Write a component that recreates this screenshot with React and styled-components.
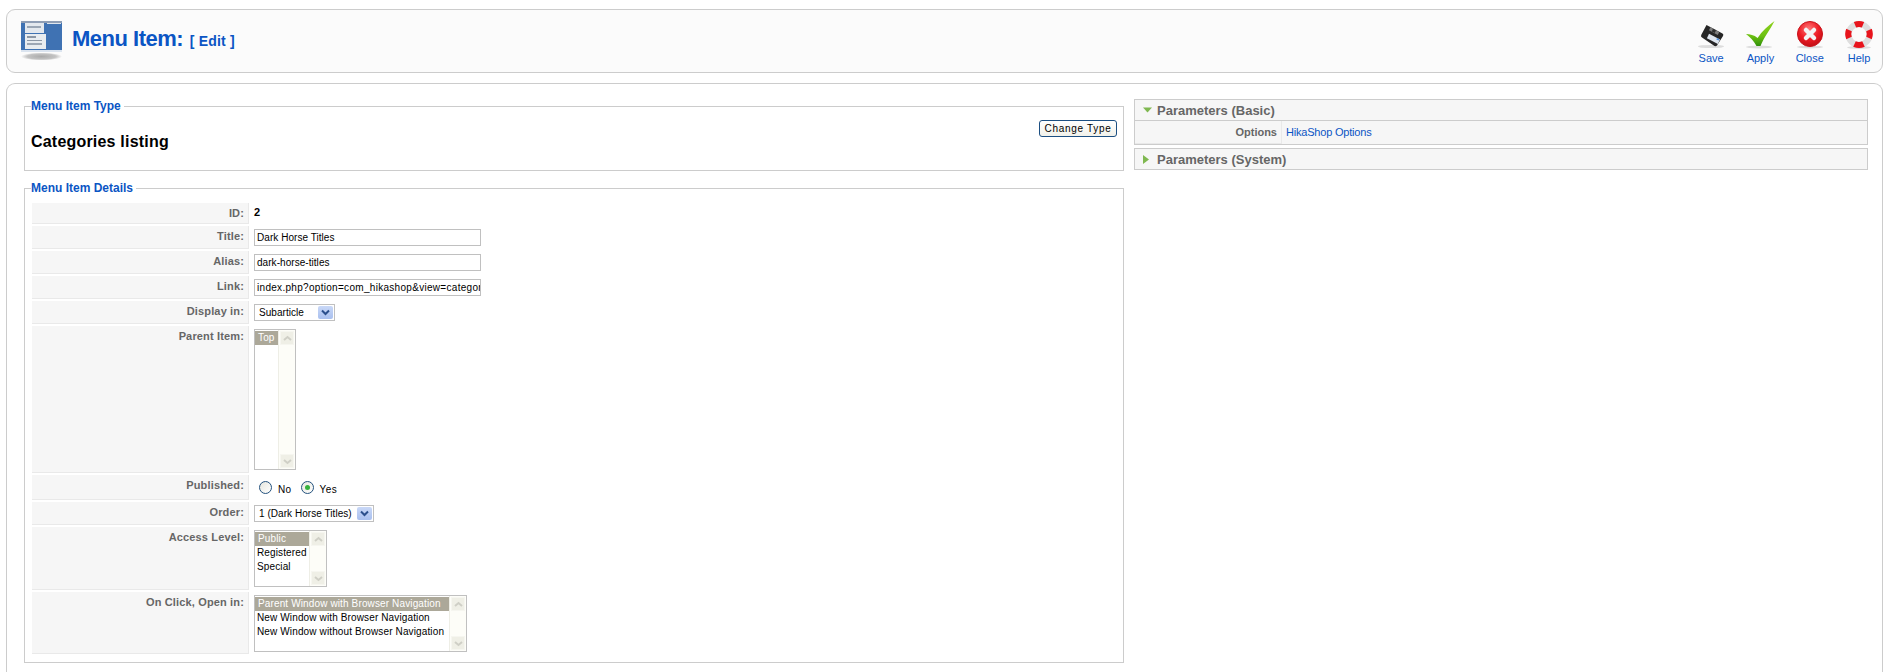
import React from "react";
import styled, { createGlobalStyle } from "styled-components";

const GlobalStyle = createGlobalStyle`
  html, body {
    margin: 0;
    background: #fff;
  }
  body {
    font-family: "Liberation Sans", Arial, sans-serif;
    font-size: 11px;
    color: #000;
    height: 672px;
    overflow: hidden;
  }
`;

const Page = styled.div`
  padding: 9px 6px 0 6px;
  display: flex;
  flex-direction: column;
  gap: 10px;
`;

const Header = styled.div`
  height: 64px;
  box-sizing: border-box;
  border: 1px solid #ccc;
  border-radius: 9px;
  background: #fbfbfb;
  display: flex;
  align-items: center;
  justify-content: space-between;
  padding: 0 0 0 14px;
`;

const TitleWrap = styled.div`
  display: flex;
  align-items: center;
  gap: 9px;
`;

const Title = styled.h1`
  margin: 0 0 4px 0;
  font-size: 22px;
  font-weight: bold;
  letter-spacing: -0.5px;
  color: #0b55c4;
  small {
    font-size: 14px;
    letter-spacing: 0.2px;
    margin-left: 1px;
  }
`;

const Toolbar = styled.div`
  display: flex;
  align-items: flex-start;
  gap: 3.3px;
`;

const ToolButton = styled.a`
  width: 46px;
  display: flex;
  flex-direction: column;
  align-items: center;
  font-size: 11px;
  color: #0b55c4;
  gap: 1px;
  svg {
    display: block;
  }
`;

const Main = styled.div`
  border: 1px solid #ccc;
  border-radius: 9px 9px 0 0;
  border-bottom: 0;
  height: 590px;
  box-sizing: border-box;
  padding: 15px 14px 0 17px;
  display: flex;
  gap: 10px;
`;

const LeftCol = styled.div`
  width: 1100px;
  flex: none;
  display: flex;
  flex-direction: column;
  gap: 11px;
  padding-top: 1px;
`;

const RightCol = styled.div`
  flex: 1;
  display: flex;
  flex-direction: column;
  gap: 3px;
`;

const Group = styled.fieldset`
  margin: 0;
  padding: 0 7px ${(p) => p.$bottom}px 7px;
  border: 1px solid #ccc;
  box-sizing: border-box;
  min-width: 0;
`;

const Legend = styled.legend`
  padding: 0 3px 0 0;
  margin-left: -1px;
  color: #0b55c4;
  font-size: 12px;
  font-weight: bold;
  line-height: 13px;
`;

const TypeBody = styled.div`
  height: 57px;
  display: flex;
  justify-content: space-between;
  align-items: flex-start;
`;

const TypeName = styled.div`
  font-size: 16px;
  font-weight: bold;
  letter-spacing: 0.2px;
  margin: 20px 0 0 -1px;
  line-height: 18px;
`;

const ChangeButton = styled.button`
  width: 78px;
  height: 17px;
  margin: 7px -1px 0 0;
  padding: 0;
  font: 10px "Liberation Sans", Arial, sans-serif;
  letter-spacing: 0.7px;
  color: #000;
  background: linear-gradient(#fff, #f1f1ea);
  border: 1px solid #1c4f82;
  border-radius: 3px;
`;

const Rows = styled.div`
  display: flex;
  flex-direction: column;
  gap: 2px;
  padding-top: 8px;
`;

const Row = styled.div`
  display: flex;
  gap: 2px;
  height: ${(p) => p.$height}px;
`;

const Label = styled.div`
  width: 217px;
  flex: none;
  box-sizing: border-box;
  background: #f6f6f6;
  border-bottom: 1px solid #e9e9e9;
  border-right: 1px solid #e9e9e9;
  text-align: right;
  padding: 4px 4px 0 0;
  color: #666;
  font-size: 11px;
  font-weight: bold;
  letter-spacing: 0.15px;
  line-height: 13px;
`;

const Value = styled.div`
  padding: 3px 0 0 3px;
  font-size: 11px;
  line-height: 13px;
  font-weight: ${(p) => (p.$bold ? "bold" : "normal")};
`;

const TextBox = styled.div`
  width: 227px;
  height: 17px;
  box-sizing: border-box;
  border: 1px solid #c0c0c0;
  padding: 1px 0 0 2px;
  font-size: 10px;
  letter-spacing: ${(p) => p.$spacing || 0.05}px;
  line-height: 13px;
  white-space: nowrap;
  overflow: hidden;
`;

const SelectBox = styled.div`
  width: ${(p) => p.$width}px;
  height: 17px;
  box-sizing: border-box;
  border: 1px solid #c0c0c0;
  padding: 1px 0 0 4px;
  font-size: 10px;
  letter-spacing: 0.05px;
  line-height: 13px;
  white-space: nowrap;
  position: relative;
`;

const SelectArrow = styled.span`
  position: absolute;
  top: 1px;
  right: 1px;
  width: 15px;
  height: 13px;
  background: linear-gradient(#c9d8f7, #a9c0ef);
  border-radius: 2px;
  display: flex;
  align-items: center;
  justify-content: center;
`;

const ListBox = styled.div`
  width: ${(p) => p.$width}px;
  height: ${(p) => p.$height}px;
  box-sizing: border-box;
  border: 1px solid #c0c0c0;
  display: flex;
  font-size: 10px;
  letter-spacing: 0.13px;
`;

const ListItems = styled.div`
  flex: 1;
  white-space: nowrap;
  padding-top: 1px;
`;

const ListItem = styled.div`
  height: 14px;
  line-height: 14px;
  padding-left: ${(p) => (p.$selected ? 3 : 2)}px;
  background: ${(p) => (p.$selected ? "#aca899" : "transparent")};
  color: ${(p) => (p.$selected ? "#fff" : "#000")};
`;

const ScrollTrack = styled.div`
  width: 16px;
  flex: none;
  background: #fdfdf8;
  border-left: 1px solid #eeeee6;
  display: flex;
  flex-direction: column;
  justify-content: space-between;
`;

const ScrollBtn = styled.div`
  height: 14px;
  margin: 1px;
  background: #efefe6;
  border: 1px solid #f6f6f0;
  box-sizing: border-box;
  display: flex;
  align-items: center;
  justify-content: center;
`;

const RadioRow = styled.div`
  display: flex;
  align-items: flex-start;
  font-size: 10px;
  line-height: 13px;
  padding: 6px 0 0 8px;
`;

const Radio = styled.span`
  width: 13px;
  height: 13px;
  box-sizing: border-box;
  border: 1px solid #24527e;
  border-radius: 50%;
  background: linear-gradient(135deg, #e6e6de, #fff);
  display: flex;
  align-items: center;
  justify-content: center;
  &::after {
    content: "";
    display: ${(p) => (p.$checked ? "block" : "none")};
    width: 5px;
    height: 5px;
    border-radius: 50%;
    background: #35b13c;
  }
`;

const RadioText = styled.span`
  margin: 2px 9px 0 6px;
  letter-spacing: 0.4px;
`;

const Panel = styled.div`
  border: 1px solid #ccc;
  background: #f6f6f6;
`;

const PanelTitle = styled.div`
  height: 20px;
  display: flex;
  align-items: center;
  padding-left: 8px;
  gap: 3px;
  font-size: 13px;
  font-weight: bold;
  color: #666;
`;

const PanelBody = styled.div`
  border-top: 1px solid #ccc;
  display: flex;
  height: 23px;
`;

const ParamLabel = styled.div`
  width: 147px;
  box-sizing: border-box;
  text-align: right;
  padding: 5px 4px 0 0;
  border-right: 1px solid #e9e9e9;
  border-bottom: 1px solid #e9e9e9;
  font-weight: bold;
  color: #666;
  line-height: 13px;
`;

const ParamValue = styled.a`
  padding: 5px 0 0 4px;
  color: #0b55c4;
  letter-spacing: -0.2px;
  line-height: 13px;
`;

const ScrollChevron = ({ up }) => (
  <svg width="9" height="7" viewBox="0 0 9 7">
    <path d={up ? "M1 5 L4.5 2 L8 5" : "M1 2 L4.5 5 L8 2"} fill="none" stroke="#cfcfc6" strokeWidth="2" />
  </svg>
);

const Scroll = () => (
  <ScrollTrack>
    <ScrollBtn><ScrollChevron up /></ScrollBtn>
    <ScrollBtn><ScrollChevron /></ScrollBtn>
  </ScrollTrack>
);

const SelectChevron = () => (
  <svg width="9" height="7" viewBox="0 0 9 7">
    <path d="M1 1.5 L4.5 5 L8 1.5" fill="none" stroke="#2b4f8c" strokeWidth="2" />
  </svg>
);

const MenuLogo = () => (
  <svg width="42" height="40" viewBox="0 0 42 40">
    <defs>
      <radialGradient id="logoShadow" cx="0.5" cy="0.5" r="0.5">
        <stop offset="0" stopColor="#aaa" />
        <stop offset="0.7" stopColor="#c4c4c4" />
        <stop offset="1" stopColor="#fbfbfb" />
      </radialGradient>
    </defs>
    <rect x="0" y="0" width="41" height="29" fill="#3f72b3" />
    <rect x="0" y="0" width="41" height="2" fill="#8f9eb5" />
    <rect x="0" y="29" width="41" height="2" fill="#dbe4ef" />
    <rect x="4" y="2" width="19" height="10" fill="#e3e8ee" />
    <rect x="6" y="5" width="14" height="2" fill="#9aa6b5" />
    <rect x="4" y="13" width="21" height="15" fill="#e8ecf0" />
    <rect x="6" y="15" width="9" height="2" fill="#8c97a5" />
    <rect x="6" y="19" width="15" height="1" fill="#8c97a5" />
    <rect x="6" y="22" width="15" height="2" fill="#9da7b4" />
    <rect x="26" y="2" width="14" height="1" fill="#dfe6ee" />
    <ellipse cx="20.5" cy="35.5" rx="20.5" ry="4" fill="url(#logoShadow)" />
  </svg>
);

const SaveIcon = () => (
  <svg width="32" height="32" viewBox="0 0 32 32">
    <ellipse cx="16" cy="27.5" rx="13" ry="1.6" fill="#ddd" />
    <path d="M11.5 6 L27.5 14.5 Q29 15.5 28 17 L22 26.5 Q21 27.5 19.5 27 L7 18.5 Q5.5 17.5 6.2 16 Z" fill="#262626" />
    <path d="M15.4 8.3 L24.2 13 L22.8 16 L14 11.3 Z" fill="#7d7d7d" />
    <path d="M18 9.7 L21 11.3 L19.8 14 L16.8 12.4 Z" fill="#2e2e2e" />
    <path d="M14 14.8 L25 20.6 L22.9 25 L11.9 19.2 Z" fill="#dfe6ef" />
    <path d="M22 19 L24.3 20.2 L23.6 21.6 L21.3 20.4 Z" fill="#4f8fdc" />
  </svg>
);

const ApplyIcon = () => (
  <svg width="32" height="32" viewBox="0 0 32 32">
    <defs>
      <linearGradient id="tick" x1="0" x2="0" y1="0" y2="1">
        <stop offset="0" stopColor="#8fd21c" />
        <stop offset="0.6" stopColor="#6cc012" />
        <stop offset="1" stopColor="#2f8f08" />
      </linearGradient>
    </defs>
    <ellipse cx="15" cy="28" rx="13" ry="1.5" fill="#ddd" />
    <path d="M2 15 C6 15 10 16 13.6 19 C18 12 24 7 30.5 2 C26 11 20 18 16.5 27 L12.5 27 C10 22 6 18 2 15 Z" fill="url(#tick)" />
  </svg>
);

const CloseIcon = () => (
  <svg width="32" height="32" viewBox="0 0 32 32">
    <defs>
      <radialGradient id="red" cx="0.45" cy="0.3" r="0.8">
        <stop offset="0" stopColor="#ff7a7a" />
        <stop offset="0.5" stopColor="#ee1c25" />
        <stop offset="1" stopColor="#b30a0f" />
      </radialGradient>
    </defs>
    <ellipse cx="16" cy="28" rx="13" ry="1.5" fill="#ddd" />
    <circle cx="16" cy="15" r="12.5" fill="url(#red)" stroke="#c9121a" />
    <path d="M12 11 L20 19 M20 11 L12 19" stroke="#f4f4f4" strokeWidth="4.5" strokeLinecap="round" />
  </svg>
);

const HelpIcon = () => (
  <svg width="32" height="32" viewBox="0 0 32 32">
    <ellipse cx="16" cy="28.5" rx="12" ry="1.5" fill="#ddd" />
    <circle cx="16" cy="15.5" r="10.5" fill="none" stroke="#dedede" strokeWidth="6" />
    <path d="M6 11 A10.5 10.5 0 0 0 6 19 M26 11 A10.5 10.5 0 0 1 26 19 M12 5.8 A10.5 10.5 0 0 1 20 5.8 M11.5 25 A10.5 10.5 0 0 0 20.5 25" fill="none" stroke="#e8141c" strokeWidth="6" />
  </svg>
);

const tools = [
  { label: "Save", Icon: SaveIcon },
  { label: "Apply", Icon: ApplyIcon },
  { label: "Close", Icon: CloseIcon },
  { label: "Help", Icon: HelpIcon },
];

const Triangle = ({ open }) => (
  <svg width="11" height="9" viewBox="0 0 11 9">
    <path d={open ? "M0 1.5 H9 L4.5 6.5 Z" : "M0 0 L6 4.5 L0 9 Z"} fill="#7fb850" />
  </svg>
);

export default function App() {
  return (
    <>
      <GlobalStyle />
      <Page>
        <Header>
          <TitleWrap>
            <MenuLogo />
            <Title>
              Menu Item: <small>[ Edit ]</small>
            </Title>
          </TitleWrap>
          <Toolbar>
            {tools.map(({ label, Icon }) => (
              <ToolButton key={label}>
                <Icon />
                {label}
              </ToolButton>
            ))}
          </Toolbar>
        </Header>
        <Main>
          <LeftCol>
            <Group $bottom={0}>
              <Legend>Menu Item Type</Legend>
              <TypeBody>
                <TypeName>Categories listing</TypeName>
                <ChangeButton>Change Type</ChangeButton>
              </TypeBody>
            </Group>
            <Group $bottom={8}>
              <Legend>Menu Item Details</Legend>
              <Rows>
                <Row $height={21}>
                  <Label>ID:</Label>
                  <Value $bold>2</Value>
                </Row>
                <Row $height={23}>
                  <Label>Title:</Label>
                  <Value><TextBox>Dark Horse Titles</TextBox></Value>
                </Row>
                <Row $height={23}>
                  <Label>Alias:</Label>
                  <Value><TextBox>dark-horse-titles</TextBox></Value>
                </Row>
                <Row $height={23}>
                  <Label>Link:</Label>
                  <Value><TextBox $spacing={0.3}>index.php?option=com_hikashop&amp;view=category&amp;layout=listing</TextBox></Value>
                </Row>
                <Row $height={23}>
                  <Label>Display in:</Label>
                  <Value>
                    <SelectBox $width={81}>Subarticle<SelectArrow><SelectChevron /></SelectArrow></SelectBox>
                  </Value>
                </Row>
                <Row $height={147}>
                  <Label>Parent Item:</Label>
                  <Value>
                    <ListBox $width={42} $height={141}>
                      <ListItems><ListItem $selected>Top</ListItem></ListItems>
                      <Scroll />
                    </ListBox>
                  </Value>
                </Row>
                <Row $height={25}>
                  <Label>Published:</Label>
                  <RadioRow>
                    <Radio /><RadioText>No</RadioText>
                    <Radio $checked /><RadioText>Yes</RadioText>
                  </RadioRow>
                </Row>
                <Row $height={23}>
                  <Label>Order:</Label>
                  <Value>
                    <SelectBox $width={120}>1 (Dark Horse Titles)<SelectArrow><SelectChevron /></SelectArrow></SelectBox>
                  </Value>
                </Row>
                <Row $height={63}>
                  <Label>Access Level:</Label>
                  <Value>
                    <ListBox $width={73} $height={57}>
                      <ListItems>
                        <ListItem $selected>Public</ListItem>
                        <ListItem>Registered</ListItem>
                        <ListItem>Special</ListItem>
                      </ListItems>
                      <Scroll />
                    </ListBox>
                  </Value>
                </Row>
                <Row $height={62}>
                  <Label>On Click, Open in:</Label>
                  <Value>
                    <ListBox $width={213} $height={57}>
                      <ListItems>
                        <ListItem $selected>Parent Window with Browser Navigation</ListItem>
                        <ListItem>New Window with Browser Navigation</ListItem>
                        <ListItem>New Window without Browser Navigation</ListItem>
                      </ListItems>
                      <Scroll />
                    </ListBox>
                  </Value>
                </Row>
              </Rows>
            </Group>
          </LeftCol>
          <RightCol>
            <Panel>
              <PanelTitle><Triangle open />Parameters (Basic)</PanelTitle>
              <PanelBody>
                <ParamLabel>Options</ParamLabel>
                <ParamValue>HikaShop Options</ParamValue>
              </PanelBody>
            </Panel>
            <Panel>
              <PanelTitle><Triangle />Parameters (System)</PanelTitle>
            </Panel>
          </RightCol>
        </Main>
      </Page>
    </>
  );
}
